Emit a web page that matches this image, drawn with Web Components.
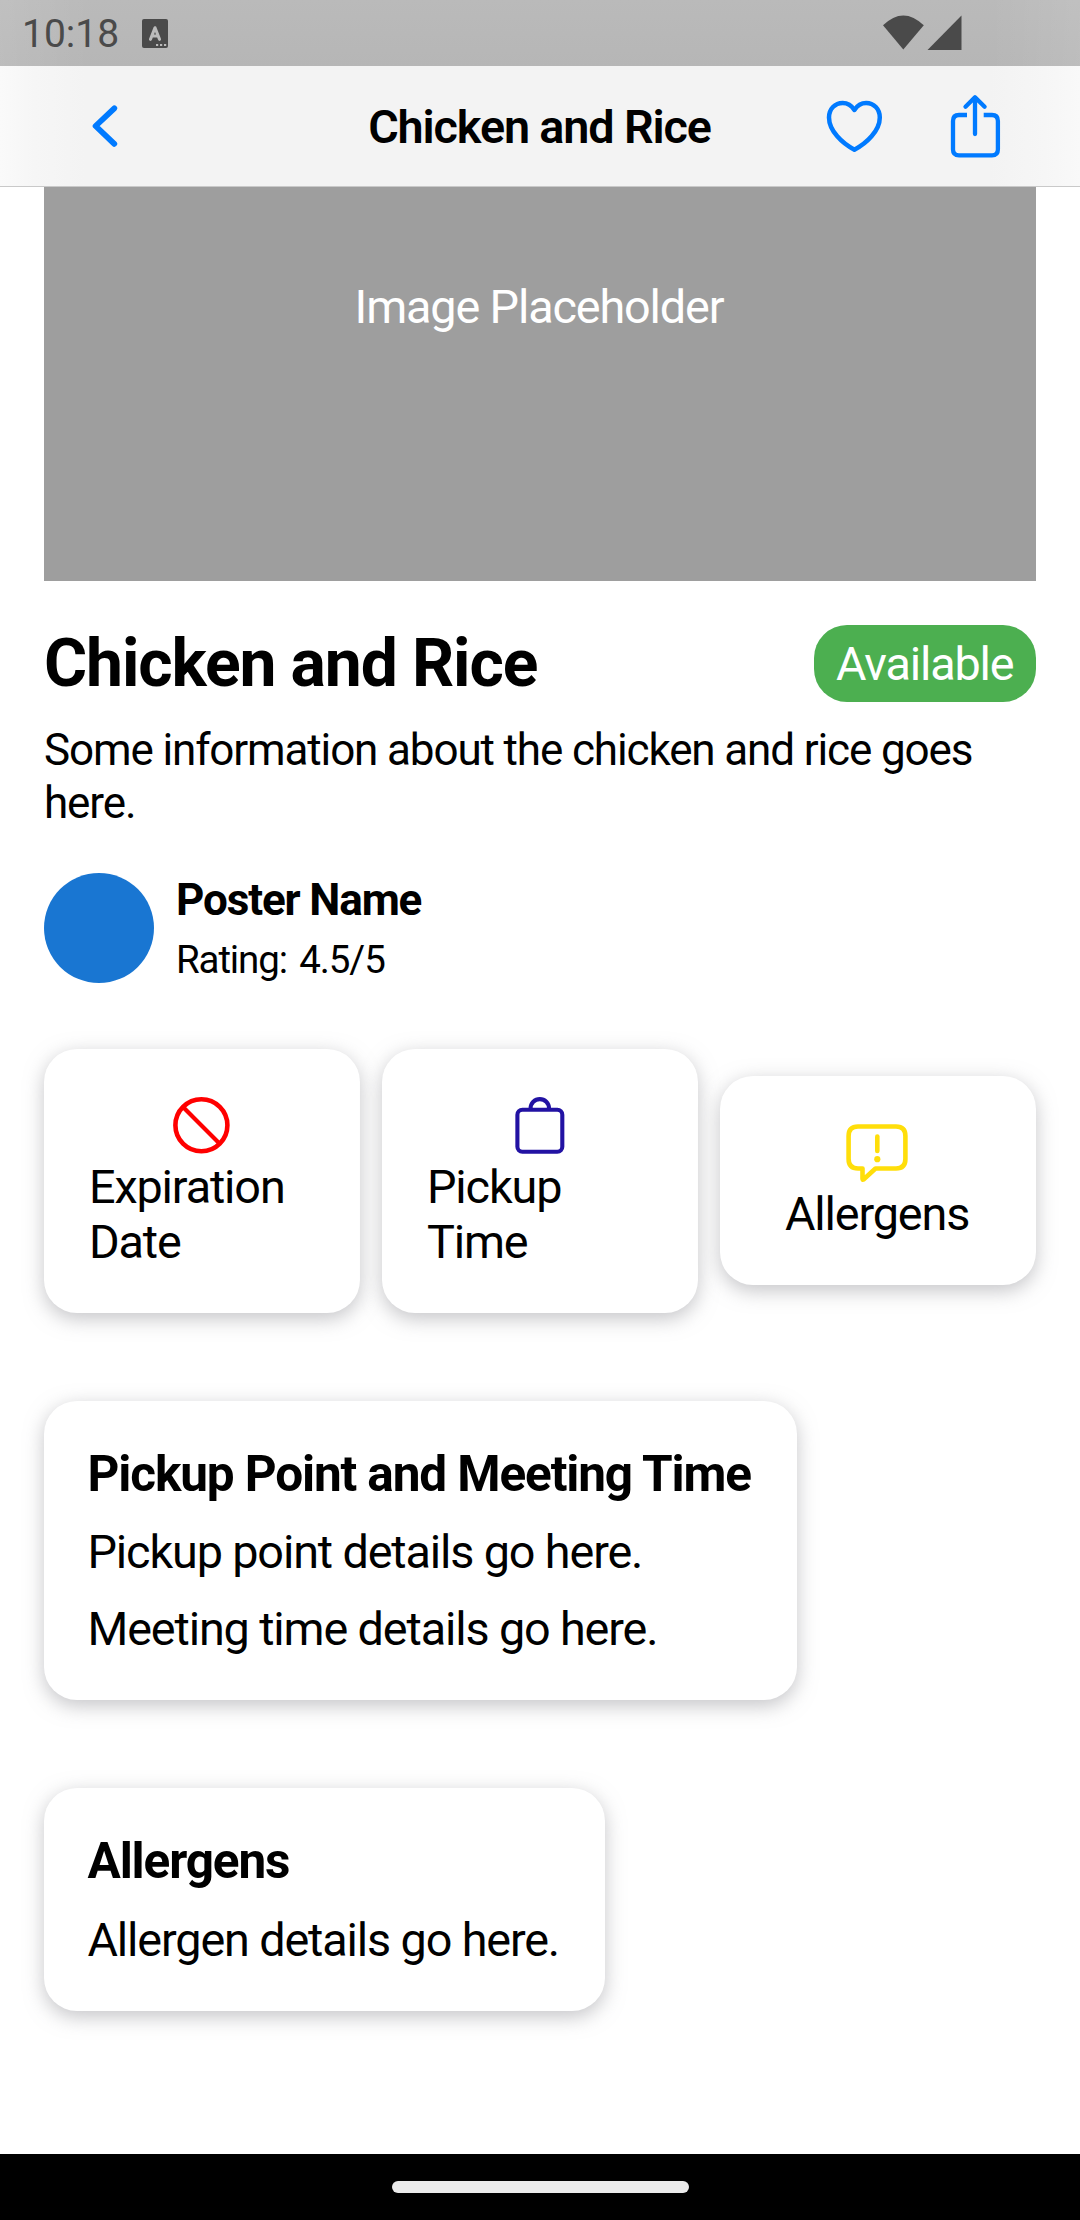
<!DOCTYPE html>
<html lang="en">
<head>
<meta charset="utf-8">
<title>Chicken and Rice</title>
<style>
html,body{margin:0;padding:0;background:#fff}
body{font-family:Roboto,"Liberation Sans",sans-serif;color:#000;width:1080px;height:2220px;overflow:hidden}
</style>
</head>
<body>
<listing-page></listing-page>
<script>
const define=(name,markup)=>customElements.define(name,class extends HTMLElement{
  constructor(){
    super();
    const t=document.createElement('template');
    t.innerHTML=markup;
    this.attachShadow({mode:'open'}).append(t.content.cloneNode(true));
  }
});

define('status-bar',`
<style>
:host{display:flex;align-items:center;height:66px;box-sizing:border-box;padding:0 118px 0 22px;color:#4a4a4a;
background:linear-gradient(90deg,#ffffff18,#fff0 90px,#fff0 990px,#ffffff18),linear-gradient(#bababa,#b6b6b6)}
.time{font-size:39px;line-height:46px;margin-top:2px;letter-spacing:0}
svg{display:block}
.kb{margin:1px 0 0 23px}
.right{display:flex;margin-left:auto;margin-top:0}
</style>
<span class="time">10:18</span>
<svg class="kb" width="26" height="29" viewBox="0 0 26 29"><rect width="26" height="29" rx="2" fill="#4a4a4a"/><path d="M8.500 20.300 13 8.800 17.500 20.300M10 17h6" fill="none" stroke="#bbb" stroke-width="3.100" stroke-linecap="round" stroke-linejoin="round"/><path d="M14 26h2.200M18 26h2.200M22 26h2.200" stroke="#bbb" stroke-width="2.200"/></svg>
<svg class="right" width="80" height="36" viewBox="0 0 80 36"><path d="M1 10.300Q21.300-9.500 41.800 10.300L21.300 34.500Z" fill="#4a4a4a"/><path d="M45.500 35 79.500 .6V35Z" fill="#4a4a4a"/></svg>`);

define('nav-bar',`
<style>
:host{display:grid;grid-template-columns:1fr auto 1fr;align-items:center;height:121px;box-sizing:border-box;
border-bottom:1px solid #c9c9c9;background:linear-gradient(90deg,#fafafa,#f6f6f6 35px,#f3f3f3 85px,#f3f3f3 990px,#f6f6f6 1045px,#f9f9f9)}
h1{margin:0;padding:2px 1px 0 0;font-size:46.75px;font-weight:600;letter-spacing:-1.13px;line-height:55px;white-space:nowrap}
svg{display:block;fill:none;stroke:#007aff}
.back{margin-left:88px}
.actions{display:flex;justify-content:flex-end;gap:64px;padding-right:78px}
</style>
<svg class="back" width="34" height="50" viewBox="0 0 34 50"><path d="M26.3 7.3 7.6 25 26.3 42.8" stroke-width="5.8" stroke-linecap="round" stroke-linejoin="round"/></svg>
<h1><slot></slot></h1>
<div class="actions">
<svg width="60" height="70" viewBox="824 91 60 70"><path d="M854.4 110C851.5 105.500 847.500 103 842.700 103C835 103 829 109 829 117.500C829 131 842.500 143.500 854.400 149.700C866.300 143.500 879.800 131 879.800 117.500C879.800 109 873.800 103 866.100 103C861.300 103 857.300 105.500 854.400 110Z" stroke-width="4.500" stroke-linejoin="round"/></svg>
<svg width="54" height="70" viewBox="948 91 54 70"><g stroke-width="4.300"><path d="M967 115H959Q953 115 953 121V149.500Q953 155.300 959 155.300H992Q997.900 155.300 997.900 149.500V121Q997.900 115 992 115H983.700"/><path d="M975 98V134M965.500 106.700 975 97.200 984.600 106.700" stroke-linecap="round" stroke-linejoin="round"/></g></svg>
</div>`);

define('image-placeholder',`
<style>
:host{display:flex;justify-content:center;align-items:flex-start;height:394.3px;box-sizing:border-box;padding:92.5px 2px 0 0;background:#9e9e9e;color:#fff;font-size:46.75px;line-height:55px;letter-spacing:-1.13px}
</style><slot></slot>`);

define('status-badge',`
<style>
:host{display:block;padding:12px 22.5px 10px 22px;border-radius:33px;background:#4caf50;color:#fff;font-size:46.75px;line-height:55px;letter-spacing:-1.13px}
</style><slot></slot>`);

define('poster-row',`
<style>
:host{display:flex;align-items:center;gap:22px;height:110px}
.avatar{width:110px;height:110px;border-radius:50%;background:#1976d2}
.text{padding-top:1px}
.name{font-size:44px;font-weight:700;letter-spacing:-1.13px;line-height:52px}
.rating{font-size:38.5px;letter-spacing:-1.13px;word-spacing:4px;line-height:46px;margin-top:11px}
</style>
<div class="avatar"></div>
<div class="text"><div class="name"><slot name="name"></slot></div><div class="rating"><slot name="rating"></slot></div></div>`);

define('info-tile',`
<style>
:host{display:flex;flex-direction:column;align-items:center;flex:1 1 0;min-width:0;box-sizing:border-box;padding:44px;border-radius:33px;background:#fff;
box-shadow:0 5.5px 19px rgba(142,142,147,.5)}
.label{font-size:46.75px;line-height:55px;letter-spacing:-1.13px;margin:1px 0 -1px;padding-left:var(--label-start,0);padding-right:var(--label-end,0)}
::slotted(svg){display:block;width:66px;height:66px;fill:none}
</style>
<slot name="icon"></slot><div class="label"><slot></slot></div>`);

define('detail-card',`
<style>
:host{display:flex;flex-direction:column;gap:22px;align-self:flex-start;box-sizing:border-box;padding:45px 46px 43px 43.5px;border-radius:33px;background:#fff;
box-shadow:0 5.5px 19px rgba(142,142,147,.5);font-size:46.75px;line-height:55px;letter-spacing:-1.13px;white-space:nowrap}
h3{margin:0;font-size:49.5px;line-height:57.7px;font-weight:700}
::slotted(p){margin:0}
</style>
<h3><slot name="title"></slot></h3><slot></slot>`);

define('gesture-bar',`
<style>
:host{display:flex;justify-content:center;height:66px;box-sizing:border-box;padding-top:27px;background:#000}
i{display:block;width:297px;height:12px;border-radius:6px;background:#ebebeb}
</style><i></i>`);

define('listing-page',`
<style>
:host{display:flex;flex-direction:column;height:2220px}
main{flex:1;display:flex;flex-direction:column;padding:0 44px;min-height:0}
.head{display:flex;justify-content:space-between;align-items:center;margin-top:44px}
h2{margin:0;font-size:66px;font-weight:700;letter-spacing:-1.13px;line-height:77px}
.desc{margin:22px 0 43px;font-size:44px;line-height:52.7px;letter-spacing:-1.13px}
.tiles{display:flex;align-items:center;gap:22px;margin:66px 0 88px}
.wrapped{--label-start:1px}
.single{--label-end:2px}
detail-card+detail-card{margin-top:88px}
</style>
<status-bar></status-bar>
<nav-bar>Chicken and Rice</nav-bar>
<main>
<image-placeholder>Image Placeholder</image-placeholder>
<div class="head"><h2>Chicken and Rice</h2><status-badge>Available</status-badge></div>
<div class="desc">Some information about the chicken and rice goes here.</div>
<poster-row><span slot="name">Poster Name</span><span slot="rating">Rating: 4.5/5</span></poster-row>
<div class="tiles">
<info-tile class="wrapped"><svg slot="icon" viewBox="0 0 66 66"><g stroke="#f00"><circle cx="32.400" cy="32.300" r="26" stroke-width="4.600"/><path d="M14 14 50.700 50.700" stroke-width="4.200"/></g></svg>Expiration Date</info-tile>
<info-tile class="wrapped"><svg slot="icon" viewBox="507 1092.700 66 66"><g stroke="#2212a3" stroke-width="4.100"><rect x="517.400" y="1109.500" width="44.900" height="42" rx="5"/><path d="M530.600 1109V1108A9.200 9.200 0 0 1 549 1108V1109"/></g></svg>Pickup Time</info-tile>
<info-tile class="single"><svg slot="icon" viewBox="845 1120 66 66"><g stroke="#ffde0a" stroke-width="4.600" stroke-linejoin="round" stroke-linecap="round"><path d="M858 1126.500H896Q905.400 1126.500 905.400 1136V1159Q905.400 1168.500 896 1168.500H875.500L863.500 1179.500Q862.500 1180 862.500 1178.500V1168.500H858Q848.600 1168.500 848.600 1159V1136Q848.600 1126.500 858 1126.500Z"/><path d="M877.300 1136.500V1151"/></g><circle cx="877.300" cy="1159.200" r="3.100" fill="#ffde0a"/></svg>Allergens</info-tile>
</div>
<detail-card><span slot="title">Pickup Point and Meeting Time</span><p>Pickup point details go here.</p><p>Meeting time details go here.</p></detail-card>
<detail-card><span slot="title">Allergens</span><p>Allergen details go here.</p></detail-card>
</main>
<gesture-bar></gesture-bar>`);
</script>
</body>
</html>
